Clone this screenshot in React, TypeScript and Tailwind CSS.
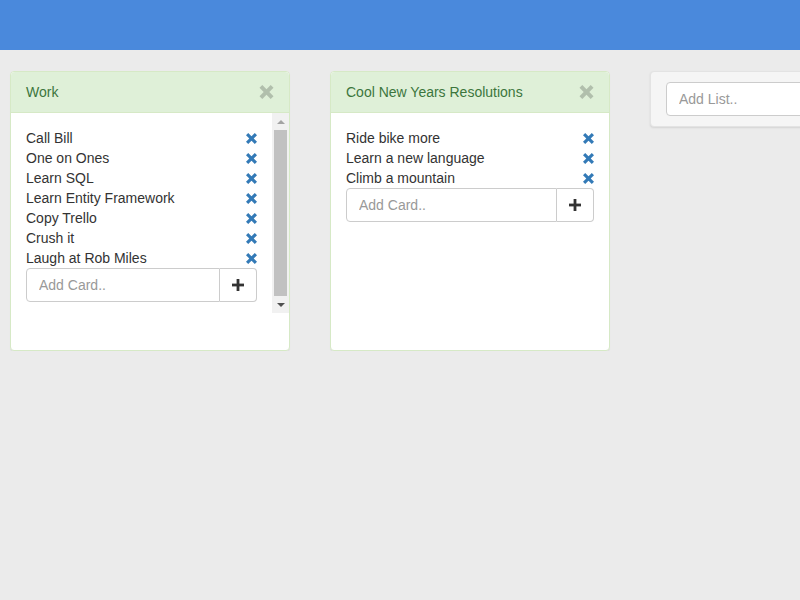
import React from 'react'

const lists = [
  {
    title: 'Work',
    cards: ['Call Bill', 'One on Ones', 'Learn SQL', 'Learn Entity Framework', 'Copy Trello', 'Crush it', 'Laugh at Rob Miles'],
  },
  {
    title: 'Cool New Years Resolutions',
    cards: ['Ride bike more', 'Learn a new language', 'Climb a mountain'],
  },
]

function RemoveIcon({ className }: { className?: string }) {
  return (
    <svg viewBox="0 0 12 12" className={className} fill="currentColor">
      <polygon points="0,2.4 2.4,0 6,3.6 9.6,0 12,2.4 8.4,6 12,9.6 9.6,12 6,8.4 2.4,12 0,9.6 3.6,6" />
    </svg>
  )
}

function PlusIcon() {
  return (
    <svg viewBox="0 0 12 12" className="h-[12px] w-[12px] text-[#333]" fill="currentColor">
      <rect x="4.6" y="0" width="2.8" height="12" />
      <rect x="0" y="4.6" width="12" height="2.8" />
    </svg>
  )
}

// drawn scrollbar, headless browser hides the real one
function FakeScrollbar() {
  return (
    <div className="flex w-[17px] shrink-0 flex-col items-center bg-[#f1f1f1]">
      <div className="flex h-[17px] w-full items-center justify-center">
        <svg viewBox="0 0 8 4" className="h-[4px] w-[8px] text-[#a3a3a3]" fill="currentColor">
          <polygon points="4,0 8,4 0,4" />
        </svg>
      </div>
      <div className="w-[13px] flex-1 bg-[#c1c1c1]" />
      <div className="flex h-[17px] w-full items-center justify-center">
        <svg viewBox="0 0 8 4" className="h-[4px] w-[8px] text-[#505050]" fill="currentColor">
          <polygon points="0,0 8,0 4,4" />
        </svg>
      </div>
    </div>
  )
}

function List({ title, cards }: { title: string; cards: string[] }) {
  const scrolls = cards.length > 6
  return (
    <div className="flex h-[280px] w-[280px] shrink-0 flex-col rounded border border-[#d6e9c6] bg-white shadow-[0_1px_1px_rgba(0,0,0,0.05)]">
      <div className="flex h-[41px] items-center justify-between rounded-t border-b border-[#d6e9c6] bg-[#dff0d8] px-[15px] text-[#3c763d]">
        <span>{title}</span>
        <RemoveIcon className="h-[14px] w-[15px] text-black opacity-20" />
      </div>
      <div className={scrolls ? 'flex h-[200px]' : 'flex'}>
        <div className="min-w-0 flex-1 overflow-hidden p-[15px]">
          <ul>
            {cards.map((card) => (
              <li key={card} className="flex h-[20px] items-center justify-between">
                <span>{card}</span>
                <RemoveIcon className="h-[11px] w-[11px] text-[#337ab7]" />
              </li>
            ))}
          </ul>
          <div className="flex h-[34px]">
            <input
              placeholder="Add Card.."
              className="min-w-0 flex-1 rounded-l border border-[#ccc] px-3 text-[14px] text-[#555] outline-none placeholder:text-[#999]"
            />
            <button className="flex w-[37px] items-center justify-center rounded-r border border-l-0 border-[#ccc] bg-white">
              <PlusIcon />
            </button>
          </div>
        </div>
        {scrolls && <FakeScrollbar />}
      </div>
    </div>
  )
}

export default function App() {
  return (
    <div className="min-h-[600px] bg-[#ebebeb] text-[14px] leading-[20px] text-[#333] [font-family:'Liberation_Sans',Arial,sans-serif]">
      <nav className="h-[50px] bg-[#4a89dc]" />
      <div className="flex gap-[40px] overflow-hidden pl-[10px] pt-[21px]">
        {lists.map((l) => (
          <List key={l.title} title={l.title} cards={l.cards} />
        ))}
        <div className="w-[280px] shrink-0 self-start rounded border border-[#e3e3e3] bg-[#f5f5f5] px-[15px] py-[10px] shadow-[0_1px_2px_rgba(0,0,0,0.1)]">
          <input
            placeholder="Add List.."
            className="h-[34px] w-full rounded border border-[#ccc] bg-white px-3 text-[14px] outline-none placeholder:text-[#999]"
          />
        </div>
      </div>
    </div>
  )
}
